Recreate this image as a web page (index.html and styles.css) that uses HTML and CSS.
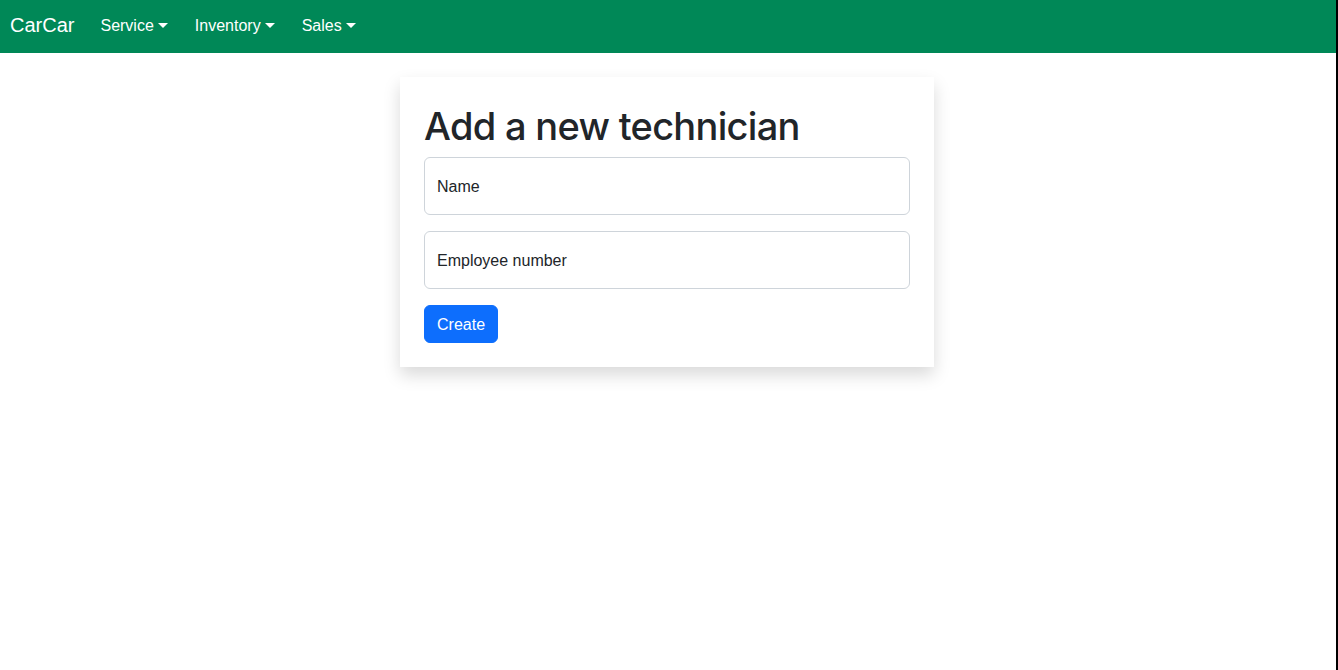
FILE: index.html
```html
<!DOCTYPE html>
<html lang="en">
<head>
<meta charset="utf-8">
<title>CarCar</title>
<link rel="stylesheet" href="styles.css">
</head>
<body>
<nav class="navbar">
  <a class="brand" href="#">CarCar</a>
  <ul class="nav">
    <li><a class="nav-link" href="#">Service</a></li>
    <li><a class="nav-link" href="#">Inventory</a></li>
    <li><a class="nav-link" href="#">Sales</a></li>
  </ul>
</nav>
<main class="page">
  <div class="card">
    <h1 class="title">Add a new technician</h1>
    <form class="form">
      <div class="field"><input type="text" placeholder="Name"></div>
      <div class="field"><input type="text" placeholder="Employee number"></div>
      <button type="button" class="btn">Create</button>
    </form>
  </div>
</main>
</body>
</html>
```
FILE: styles.css
```css
html { background: #000; }
body {
  margin: 0 2px 0 0;
  min-height: 100vh;
  background: #fff;
  font-family: "Liberation Sans", Arial, sans-serif;
  font-size: 16px;
  color: #212529;
}
.navbar {
  box-sizing: border-box;
  height: 53px;
  background: #008857;
  display: flex;
  align-items: center;
  padding: 0 10px 2px;
}
.brand {
  color: #fff;
  text-decoration: none;
  font-size: 20px;
  margin-right: 12px;
}
.nav {
  display: flex;
  list-style: none;
  margin: 0;
  padding: 0;
}
.nav-link {
  display: flex;
  align-items: center;
  color: #fff;
  text-decoration: none;
  font-size: 16px;
  padding: 8px 13px 8px 14px;
}
.nav-link::after {
  content: "";
  display: inline-block;
  margin-left: 4px;
  border-top: 5px solid #fff;
  border-left: 5px solid transparent;
  border-right: 5px solid transparent;
}
.page {
  display: flex;
  justify-content: center;
  padding: 24px 2px 0 0;
}
.card {
  width: 486px;
  padding: 24px;
  background: #fff;
  box-shadow: 0 8px 16px rgba(0,0,0,.15);
}
.title {
  margin: 0 0 8px;
  padding-top: 2px;
  font-family: Inter, "Liberation Sans", sans-serif;
  font-weight: 500;
  font-size: 38px;
  line-height: 46px;
  letter-spacing: -0.7px;
  color: #212529;
}
.form { display: flex; flex-direction: column; align-items: flex-start; }
.field { width: 100%; margin-bottom: 16px; }
.field input {
  box-sizing: border-box;
  width: 100%;
  height: 58px;
  padding: 17px 12px 15px;
  border: 1px solid #ced4da;
  border-radius: 6px;
  font-family: "Liberation Sans", Arial, sans-serif;
  font-size: 16px;
  line-height: 24px;
  color: #212529;
}
.field input::placeholder { color: #212529; opacity: 1; }
.btn {
  height: 38px;
  padding: 7px 12px 5px;
  border: 1px solid #0d6efd;
  border-radius: 6px;
  background: #0d6efd;
  color: #fff;
  font-family: "Liberation Sans", Arial, sans-serif;
  font-size: 16px;
  line-height: 24px;
}
```
